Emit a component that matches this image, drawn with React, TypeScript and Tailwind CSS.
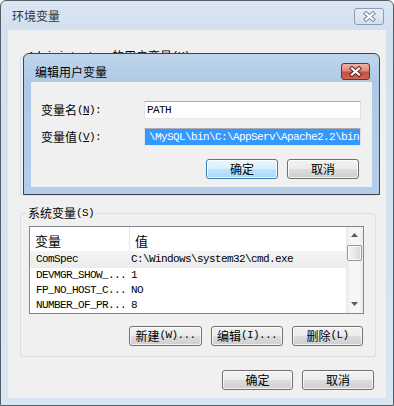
import React from 'react'

// Win7 basic-theme "环境变量" window with the "编辑用户变量" dialog on top

const cjk = "font-['Noto_Sans_CJK_SC',sans-serif]"
const mono = "font-['Liberation_Mono','Noto_Sans_CJK_SC',monospace] text-[11px] tracking-[-0.6px]"

const rows = [
  { name: 'ComSpec', value: 'C:\\Windows\\system32\\cmd.exe', hot: true },
  { name: 'DEVMGR_SHOW_...', value: '1' },
  { name: 'FP_NO_HOST_C...', value: 'NO' },
  { name: 'NUMBER_OF_PR...', value: '8' },
]

const XGlyph: React.FC<{ outline: string }> = ({ outline }) => (
  <svg width="13" height="11" viewBox="0 0 13 11">
    <path d="M3 2.5 L10 8.5 M10 2.5 L3 8.5" stroke={outline} strokeWidth="4.2" strokeLinecap="square" fill="none" />
    <path d="M3 2.5 L10 8.5 M10 2.5 L3 8.5" stroke="#ffffff" strokeWidth="2.2" strokeLinecap="square" fill="none" />
  </svg>
)

const Label: React.FC<{ zh: string; key1: string; tail?: string; underline?: boolean }> = ({ zh, key1, tail = '', underline }) => (
  <span className="flex items-center whitespace-nowrap text-black">
    <span className={`${cjk} text-[12px] leading-[14px]`}>{zh}</span>
    <span className={mono}>
      (<span className={underline ? 'underline' : ''}>{key1}</span>){tail}
    </span>
  </span>
)

const Btn: React.FC<{ children: React.ReactNode; primary?: boolean; w?: string }> = ({ children, primary, w = 'w-[72px]' }) => (
  <div
    className={`${w} h-[20px] flex items-center justify-center rounded-[3px] border shadow-[inset_0_0_0_1px_rgba(255,255,255,0.75)] ${
      primary
        ? 'border-[#3c7fb1] bg-[linear-gradient(#eaf6fd_0%,#d9f0fc_50%,#bee6fd_50%,#a7d9f5_100%)]'
        : 'border-[#707070] bg-[linear-gradient(#f2f2f2_0%,#ebebeb_50%,#dddddd_50%,#cfcfcf_100%)]'
    }`}
  >
    {children}
  </div>
)

const Arrow: React.FC<{ up?: boolean }> = ({ up }) => (
  <svg width="7" height="4" viewBox="0 0 7 4">
    <path d={up ? 'M0 4 L3.5 0 L7 4 Z' : 'M0 0 L7 0 L3.5 4 Z'} fill="#5a5a5a" />
  </svg>
)

export default function App() {
  return (
    <div className="w-[394px] h-[406px] relative overflow-hidden bg-white">
      {/* outer window (inactive) */}
      <div className="w-full h-full flex flex-col border border-[#555d67] rounded-t-[6px] bg-[linear-gradient(#dbe6f3,#d2e0ef_30px,#d8e5f3)] px-[7px] pb-[7px]">
        <div className="h-[29px] shrink-0 flex items-center justify-between pl-[4px] pr-[2px]">
          <span className={`${cjk} text-[12px] leading-[14px] text-[#333]`}>环境变量</span>
          <div className="w-[30px] h-[17px] mt-[1px] flex items-center justify-center rounded-[3px] border border-[#8d9db1] bg-[linear-gradient(#e6eef7,#d3e0ee)]">
            <XGlyph outline="#7d8b9b" />
          </div>
        </div>

        <div className="flex-1 bg-[#f0f0f0] flex flex-col pt-[18px]">
          {/* user variables (covered by the dialog) */}
          <fieldset className="ml-[12px] mr-[10px] h-[148px] border border-[#d5dfe5] rounded-[3px] pl-[5px]">
            <legend className="px-[2px] flex items-center whitespace-nowrap text-black">
              <span className={mono}>Administrator</span>
              <span className={`ml-[6px] ${cjk} text-[12px] leading-[14px]`}>的用户变量</span>
              <span className={mono}>(U)</span>
            </legend>
          </fieldset>

          {/* system variables */}
          <fieldset className="mt-[9px] ml-[12px] mr-[10px] border border-[#d5dfe5] rounded-[3px] pl-[5px] pr-[11px] pt-[4px] pb-[10px]">
            <legend className="px-[2px]">
              <Label zh="系统变量" key1="S" />
            </legend>

            <div className="ml-[3px] h-[88px] border border-[#828790] bg-white flex">
              <div className="flex-1 flex flex-col overflow-hidden">
                <div className="h-[24px] shrink-0 flex bg-white">
                  <div className={`w-[99px] pl-[5px] pt-[7px] ${cjk} text-[13px] leading-[14px] text-black`}>变量</div>
                  <div className="w-px h-full bg-[#e5e5e5]" />
                  <div className={`flex-1 pl-[5px] pt-[7px] ${cjk} text-[13px] leading-[14px] text-black`}>值</div>
                </div>
                {rows.map((r) => (
                  <div
                    key={r.name}
                    className={`flex shrink-0 items-center whitespace-nowrap text-black ${r.hot ? 'h-[17px] bg-[linear-gradient(#f4f4f4,#ececec)]' : 'h-[15px]'}`}
                  >
                    <div className={`w-[100px] pl-[6px] ${mono} leading-[15px]`}>{r.name}</div>
                    <div className={`flex-1 pl-[1px] ${mono} leading-[15px]`}>{r.value}</div>
                  </div>
                ))}
              </div>

              {/* vertical scrollbar */}
              <div className="w-[17px] shrink-0 flex flex-col bg-[linear-gradient(90deg,#e9e9e9,#f6f6f6_25%,#f6f6f6_75%,#ececec)]">
                <div className="h-[17px] flex items-center justify-center">
                  <Arrow up />
                </div>
                <div className="mx-[1px] mt-[1px] h-[16px] rounded-[2px] border border-[#979797] bg-[linear-gradient(90deg,#f3f3f3,#e8e8e8_50%,#d6d6d6)] shadow-[inset_0_0_0_1px_rgba(255,255,255,0.8)]" />
                <div className="flex-1" />
                <div className="h-[17px] flex items-center justify-center">
                  <Arrow />
                </div>
              </div>
            </div>

            <div className="mt-[12px] flex justify-end gap-[9px] pr-[1px]">
              <Btn w="w-[73px]"><Label zh="新建" key1="W" tail="..." /></Btn>
              <Btn><Label zh="编辑" key1="I" tail="..." /></Btn>
              <Btn w="w-[71px]"><Label zh="删除" key1="L" /></Btn>
            </div>
          </fieldset>

          <div className="mt-[13px] flex justify-end gap-[9px] pr-[12px]">
            <Btn w="w-[71px]"><span className={`${cjk} text-[12px] leading-[14px] text-black`}>确定</span></Btn>
            <Btn><span className={`${cjk} text-[12px] leading-[14px] text-black`}>取消</span></Btn>
          </div>
        </div>
      </div>

      {/* edit user variable dialog (active window on top) */}
      <div className="absolute left-[23px] top-[53px] w-[357px] h-[142px] flex flex-col border border-[#3b4552] rounded-t-[6px] bg-[linear-gradient(#c0d5ec,#aec9e7_28px,#b5cdea)] px-[7px] pb-[7px]">
        <div className="h-[28px] shrink-0 flex items-start justify-between pl-[4px] pr-[2px]">
          <span className={`mt-[11px] ${cjk} text-[12px] leading-[14px] text-black`}>编辑用户变量</span>
          <div className="mt-[9px] w-[29px] h-[17px] flex items-center justify-center rounded-[3px] border border-[#6f302a] bg-[linear-gradient(#ebb3a5_0%,#dc8a78_45%,#c7503f_55%,#cc6451_100%)]">
            <XGlyph outline="#5b2620" />
          </div>
        </div>

        <div className="flex-1 bg-[#f0f0f0] flex flex-col pt-[19px] pl-[10px] pr-[11px]">
          <div className="h-[18px] flex items-center">
            <div className="w-[103px]">
              <Label zh="变量名" key1="N" tail=":" underline />
            </div>
            <div className="flex-1 h-[18px] border border-[#abadb3] border-b-[#e3e9ef] border-r-[#dbdfe6] border-l-[#e2e3ea] bg-white flex items-center pl-[2px]">
              <span className={`${mono} leading-[14px] text-black`}>PATH</span>
            </div>
          </div>

          <div className="mt-[9px] h-[18px] flex items-center">
            <div className="w-[103px]">
              <Label zh="变量值" key1="V" tail=":" underline />
            </div>
            <div className="flex-1 h-[18px] border border-[#abadb3] border-b-[#e3e9ef] border-r-[#dbdfe6] border-l-[#e2e3ea] bg-white flex items-center overflow-hidden">
              <div className="w-full h-full bg-[#3399ff] flex items-center justify-end whitespace-nowrap pr-[1px]">
                <span className={`${mono} leading-[14px] text-white`}>{'\\MySQL\\bin\\C:\\AppServ\\Apache2.2\\bin'}</span>
              </div>
            </div>
          </div>

          <div className="mt-[13px] flex justify-end gap-[9px] pr-[2px]">
            <Btn primary><span className={`${cjk} text-[12px] leading-[14px] text-black`}>确定</span></Btn>
            <Btn><span className={`${cjk} text-[12px] leading-[14px] text-black`}>取消</span></Btn>
          </div>
        </div>
      </div>
    </div>
  )
}
